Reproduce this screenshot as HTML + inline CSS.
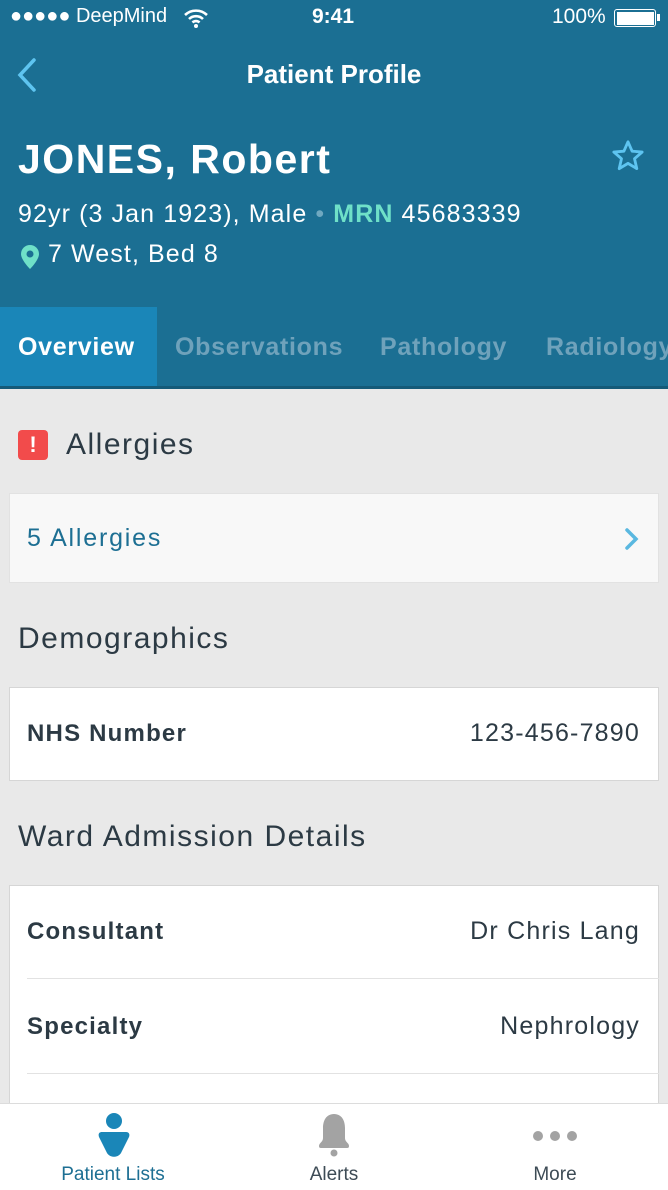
<!DOCTYPE html>
<html><head><meta charset="utf-8"><style>
*{margin:0;padding:0;box-sizing:border-box}
body{width:668px;height:1190px;overflow:hidden;background:#e9e9e9;font-family:"Liberation Sans",sans-serif;position:relative;color:#2c3a44}
.a{position:absolute;white-space:nowrap}
.hdr{position:absolute;left:0;top:0;width:668px;height:388px;background:#1b6f93}
.card{position:absolute;left:9px;width:650px;background:#fff;border:1px solid #d6d6d6}
.lbl{font-size:24px;font-weight:bold;color:#2c3a44;letter-spacing:1.2px}
.val{font-size:25px;color:#2c3a44;right:28px;letter-spacing:1.2px}
.h{font-size:30px;color:#2c3a44;letter-spacing:1.5px}
.tab{color:#6fa2bb;font-size:25px;font-weight:bold;letter-spacing:0.7px}
</style></head><body>
<div class="hdr"></div>
<div class="a" style="left:10px;top:5px;color:#fff;font-size:20px">●●●●● DeepMind</div>
<svg class="a" style="left:183px;top:8px" width="26" height="20" viewBox="0 0 26 20"><path d="M2 7a16 16 0 0 1 22 0M6 11a10 10 0 0 1 14 0M9.5 14.5a5 5 0 0 1 7 0" stroke="#fff" stroke-width="2.6" fill="none"/><circle cx="13" cy="18" r="2" fill="#fff"/></svg>
<div class="a" style="left:312px;top:5px;color:#fff;font-size:21px;font-weight:bold">9:41</div>
<div class="a" style="left:552px;top:5px;color:#fff;font-size:21px">100%</div>
<div class="a" style="left:614px;top:9px;width:42px;height:18px;border:1.5px solid #fff;border-radius:3px;padding:1.5px"><div style="width:100%;height:100%;background:#fff"></div></div>
<div class="a" style="left:657px;top:14px;width:3px;height:7px;background:#fff"></div>
<svg class="a" style="left:15px;top:57px" width="24" height="36" viewBox="0 0 24 36"><path d="M19 3L5 18l14 15" stroke="#5ec4f0" stroke-width="3.5" fill="none" stroke-linecap="round"/></svg>
<div class="a" style="left:0;width:668px;text-align:center;top:59px;color:#fff;font-size:26px;font-weight:bold">Patient Profile</div>
<div class="a" style="left:18px;top:136px;color:#fff;font-size:41px;font-weight:bold;letter-spacing:1.5px">JONES, Robert</div>
<svg class="a" style="left:611px;top:139px" width="34" height="34" viewBox="0 0 24 24"><path d="M12 2l2.9 6.6 7.1.6-5.4 4.7 1.6 7L12 17.2 5.8 20.9l1.6-7L2 9.2l7.1-.6z" stroke="#5ec4f0" stroke-width="2" fill="none" stroke-linejoin="round"/></svg>
<div class="a" style="left:18px;top:200px;color:#fff;font-size:25px;letter-spacing:1.1px">92yr (3 Jan 1923), Male <span style="color:#6fa8c0">•</span> <span style="color:#6fe0c8;font-weight:bold">MRN</span> 45683339</div>
<svg class="a" style="left:20px;top:244px" width="20" height="26" viewBox="0 0 20 26"><path d="M10 1a9 9 0 0 1 9 9c0 6-9 15-9 15S1 16 1 10a9 9 0 0 1 9-9z" fill="#6fe0c8"/><circle cx="10" cy="10" r="3.5" fill="#1b6f93"/></svg>
<div class="a" style="left:48px;top:240px;color:#fff;font-size:25px;letter-spacing:1.1px">7 West, Bed 8</div>
<div class="a" style="left:0;top:307px;width:157px;height:80px;background:#1a86b8"></div>
<div class="a" style="left:0;top:386px;width:668px;height:3px;background:#155a78"></div>
<div class="a tab" style="left:18px;top:333px;color:#fff">Overview</div>
<div class="a tab" style="left:175px;top:333px">Observations</div>
<div class="a tab" style="left:380px;top:333px">Pathology</div>
<div class="a tab" style="left:546px;top:333px">Radiology</div>
<div class="a" style="left:18px;top:430px;width:30px;height:30px;background:#f24b4b;border-radius:4px;color:#fff;font-weight:bold;font-size:22px;text-align:center;line-height:30px">!</div>
<div class="a h" style="left:66px;top:428px">Allergies</div>
<div class="card" style="top:493px;height:90px;background:#f8f8f8;border-color:#e2e2e2"></div>
<div class="a" style="left:27px;top:524px;font-size:25px;color:#1d6f93;letter-spacing:1.8px">5 Allergies</div>
<svg class="a" style="left:624px;top:527px" width="16" height="24" viewBox="0 0 16 24"><path d="M3 3l9 9-9 9" stroke="#5ab8e0" stroke-width="3.5" fill="none" stroke-linecap="round"/></svg>
<div class="a h" style="left:18px;top:622px">Demographics</div>
<div class="card" style="top:687px;height:94px"></div>
<div class="a lbl" style="left:27px;top:720px">NHS Number</div>
<div class="a val" style="top:719px">123-456-7890</div>
<div class="a h" style="left:18px;top:820px">Ward Admission Details</div>
<div class="card" style="top:885px;height:260px"></div>
<div class="a lbl" style="left:27px;top:918px">Consultant</div>
<div class="a val" style="top:917px">Dr Chris Lang</div>
<div class="a" style="left:27px;top:978px;width:632px;height:1px;background:#e2e2e2"></div>
<div class="a lbl" style="left:27px;top:1013px">Specialty</div>
<div class="a val" style="top:1012px">Nephrology</div>
<div class="a" style="left:27px;top:1073px;width:632px;height:1px;background:#e2e2e2"></div>
<div class="a" style="left:0;top:1103px;width:668px;height:87px;background:#fff;border-top:1px solid #dcdcdc"></div>
<svg class="a" style="left:96px;top:1112px" width="36" height="46" viewBox="0 0 36 46"><circle cx="18" cy="9" r="8" fill="#1a86b8"/><path d="M6 20h24c3 0 4 2 3 5l-8 16c-3 5-11 5-14 0L3 25c-1-3 0-5 3-5z" fill="#1a86b8"/></svg>
<svg class="a" style="left:316px;top:1112px" width="36" height="46" viewBox="0 0 36 46"><path d="M18 2c8 0 11 7 11 14v10c0 4 4 5 4 8 0 2-1 2-3 2H6c-2 0-3 0-3-2 0-3 4-4 4-8V16C7 9 10 2 18 2z" fill="#a3a3a3"/><circle cx="18" cy="41" r="3.5" fill="#a3a3a3"/></svg>
<svg class="a" style="left:531px;top:1128px" width="48" height="16" viewBox="0 0 48 16"><circle cx="7" cy="8" r="5" fill="#a3a3a3"/><circle cx="24" cy="8" r="5" fill="#a3a3a3"/><circle cx="41" cy="8" r="5" fill="#a3a3a3"/></svg>
<div class="a" style="left:0;width:226px;text-align:center;top:1164px;font-size:19px;color:#1d6f93">Patient Lists</div>
<div class="a" style="left:222px;width:224px;text-align:center;top:1164px;font-size:19px;color:#3d4b55">Alerts</div>
<div class="a" style="left:442px;width:226px;text-align:center;top:1164px;font-size:19px;color:#3d4b55">More</div>
</body></html>
